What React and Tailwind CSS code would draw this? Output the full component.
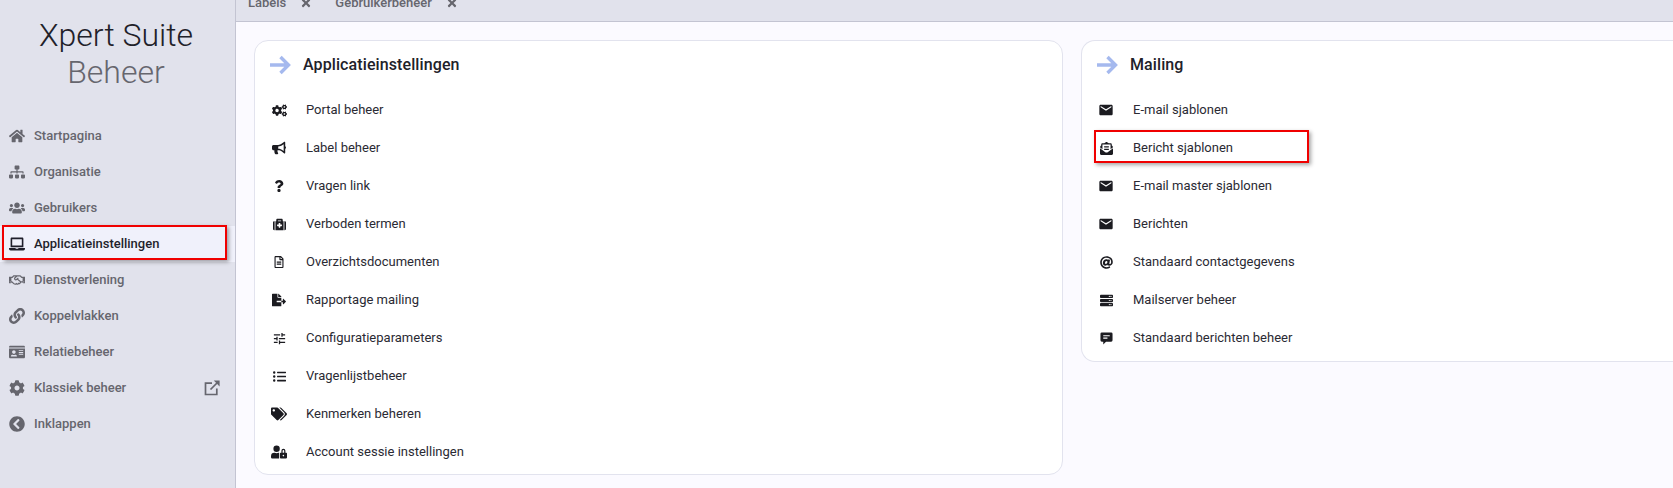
import React from 'react'
import {
  FaHome, FaSitemap, FaUsers, FaLaptop, FaRegHandshake, FaLink, FaIdCard, FaCog, FaChevronCircleLeft,
  FaCogs, FaBullhorn, FaQuestion, FaMedkit, FaRegFileAlt, FaFileExport, FaListUl, FaTags,
  FaUserLock, FaEnvelopeOpenText, FaAt, FaServer, FaTimes,
} from 'react-icons/fa'
import { MdEmail, MdTune } from 'react-icons/md'

const MessageIcon = ({ size }) => (
  <svg width={size} height={size} viewBox="0 0 14 14">
    <path fill="currentColor" fillRule="evenodd" d="M2 0.5h10a1.5 1.5 0 0 1 1.5 1.5v7a1.5 1.5 0 0 1-1.5 1.5H6.5L3.5 13.5v-3H2A1.5 1.5 0 0 1 .5 9V2A1.5 1.5 0 0 1 2 .5ZM3.5 3.5v1.2h7V3.5ZM3.5 6v1.2h4.5V6Z" />
  </svg>
)

const ExternalIcon = () => (
  <svg width="16" height="16" viewBox="0 0 16 16" fill="none" stroke="currentColor" strokeWidth="1.7">
    <path d="M8 3.2H1.5v11.3h11.3V8.5" />
    <path d="M6.5 9.5 13 3" />
    <path d="M9.8 .6H15.6V6.4Z" fill="currentColor" stroke="none" />
  </svg>
)

const sideItems = [
  { label: 'Startpagina', icon: FaHome },
  { label: 'Organisatie', icon: FaSitemap },
  { label: 'Gebruikers', icon: FaUsers },
  { label: 'Applicatieinstellingen', icon: FaLaptop, active: true },
  { label: 'Dienstverlening', icon: FaRegHandshake },
  { label: 'Koppelvlakken', icon: FaLink },
  { label: 'Relatiebeheer', icon: FaIdCard },
  { label: 'Klassiek beheer', icon: FaCog, external: true },
  { label: 'Inklappen', icon: FaChevronCircleLeft },
]

const appItems = [
  { label: 'Portal beheer', icon: FaCogs, size: 15 },
  { label: 'Label beheer', icon: FaBullhorn, size: 14 },
  { label: 'Vragen link', icon: FaQuestion, size: 12 },
  { label: 'Verboden termen', icon: FaMedkit, size: 13 },
  { label: 'Overzichtsdocumenten', icon: FaRegFileAlt, size: 12 },
  { label: 'Rapportage mailing', icon: FaFileExport, size: 14 },
  { label: 'Configuratieparameters', icon: MdTune, size: 15 },
  { label: 'Vragenlijstbeheer', icon: FaListUl, size: 13 },
  { label: 'Kenmerken beheren', icon: FaTags, size: 16 },
  { label: 'Account sessie instellingen', icon: FaUserLock, size: 16 },
]

const mailItems = [
  { label: 'E-mail sjablonen', icon: MdEmail, size: 16 },
  { label: 'Bericht sjablonen', icon: FaEnvelopeOpenText, size: 13, marked: true },
  { label: 'E-mail master sjablonen', icon: MdEmail, size: 16 },
  { label: 'Berichten', icon: MdEmail, size: 16 },
  { label: 'Standaard contactgegevens', icon: FaAt, size: 13 },
  { label: 'Mailserver beheer', icon: FaServer, size: 13 },
  { label: 'Standaard berichten beheer', icon: MessageIcon, size: 13 },
]

const SideItem = ({ item }) => {
  const Icon = item.icon
  return (
    <div className={`relative flex h-9 items-center pr-[15px] pl-2 ${item.active ? 'bg-[#f0f1fb] text-[#1f1f2b]' : 'text-[#66666e]'}`}>
      <span className="flex w-[17px] justify-center"><Icon size={16} /></span>
      <span className="ml-[9px] flex-1 text-[13px] font-medium">{item.label}</span>
      {item.external && <ExternalIcon />}
      {item.active && (
        <div className="absolute top-[-1px] left-[2px] h-[35px] w-[225px] border-2 border-[#f00000] shadow-[2px_2px_4px_rgba(0,0,0,0.35)]" />
      )}
    </div>
  )
}

const Card = ({ title, items, className }) => (
  <section className={`rounded-tl-[14px] rounded-bl-[14px] border border-[#e2e3ee] bg-white pt-[3px] pl-[14px] ${className}`}>
    <header className="flex h-[42px] items-center">
      <svg width="22" height="20" viewBox="0 0 22 20" fill="none" stroke="#a5b9ee" strokeWidth="3.4">
        <path d="M1 10h18M11.5 2l8 8-8 8" />
      </svg>
      <h2 className="ml-[12px] text-[16px] font-medium tracking-[0.1px] text-[#212129]">{title}</h2>
    </header>
    <ul className="mt-[5px]">
      {items.map((item) => {
        const Icon = item.icon
        return (
          <li key={item.label} className="relative flex h-[38px] items-center">
            <span className="ml-[2px] flex w-[16px] justify-center text-[#1b1b20]"><Icon size={item.size} /></span>
            <span className="ml-[19px] text-[13px] text-[#2a2a33]">{item.label}</span>
            {item.marked && (
              <div className="absolute top-[1px] left-[-2px] h-[33px] w-[215px] border-2 border-[#f00000] shadow-[2px_2px_4px_rgba(0,0,0,0.35)]" />
            )}
          </li>
        )
      })}
    </ul>
  </section>
)

const Tab = ({ label }) => (
  <div className="flex items-center">
    <span className="text-[13px] font-medium text-[#66666e]">{label}</span>
    <FaTimes size={12} className="ml-[14px] text-[#66666e]" />
  </div>
)

export default function App() {
  return (
    <div className="flex h-[488px] w-[1673px] overflow-hidden bg-[#fbfaff] font-['Roboto',sans-serif]">
      <aside className="flex w-[236px] shrink-0 flex-col border-r border-[#c3c4d2] bg-[#e1e2ec]">
        <div className="mt-[17px] pr-[3px] text-center text-[32px] leading-[37px] font-light">
          <div className="text-[#212129]">Xpert Suite</div>
          <div className="text-[#66666e]">Beheer</div>
        </div>
        <nav className="mt-[27px]">
          {sideItems.map((item) => <SideItem key={item.label} item={item} />)}
        </nav>
      </aside>
      <main className="flex min-w-0 flex-1 flex-col">
        <div className="flex h-[22px] shrink-0 items-start border-b border-[#c3c4d2] bg-[#e1e2ec] pl-[12px]">
          <div className="-mt-[7px] flex gap-[23px]">
            <Tab label="Labels" />
            <Tab label="Gebruikerbeheer" />
          </div>
        </div>
        <div className="flex gap-[18px] pt-[18px] pl-[18px]">
          <Card title="Applicatieinstellingen" items={appItems} className="h-[435px] w-[809px] rounded-tr-[14px] rounded-br-[14px]" />
          <Card title="Mailing" items={mailItems} className="h-[322px] flex-1 border-r-0" />
        </div>
      </main>
    </div>
  )
}
